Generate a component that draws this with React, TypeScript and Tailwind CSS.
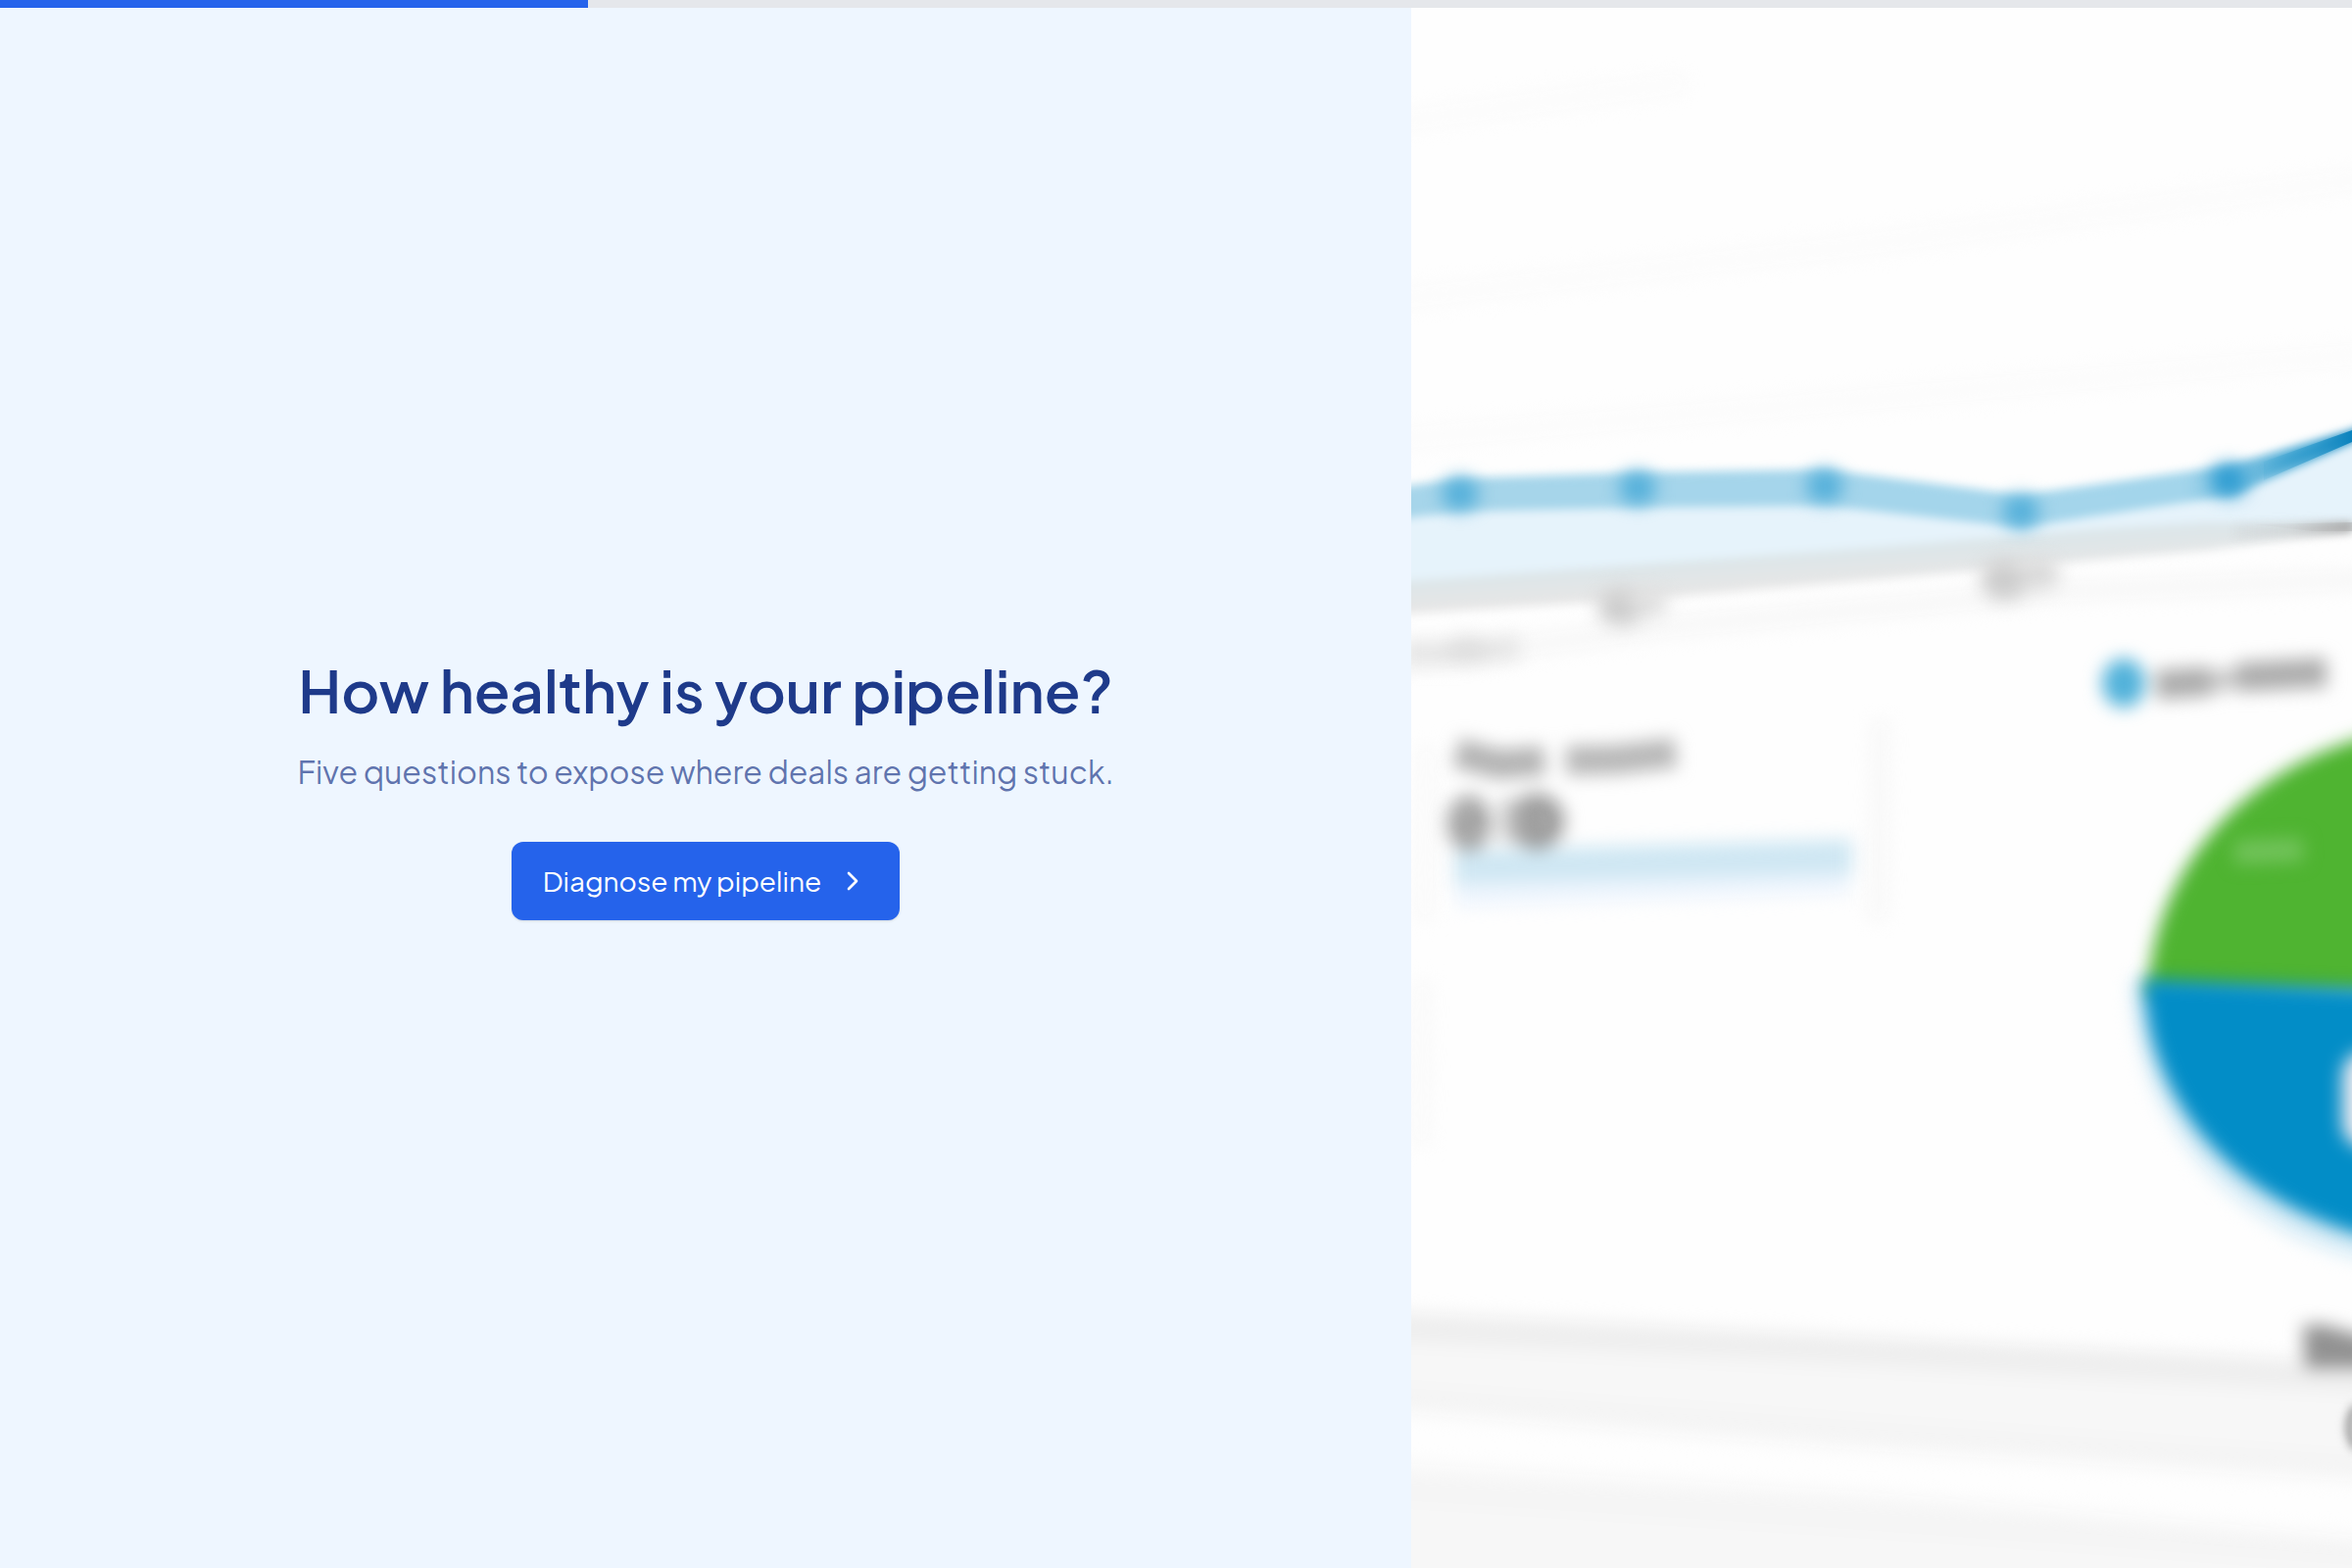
import { ChevronRight } from 'lucide-react';

const PROGRESS = 25;

const linePoints = [
  [1490, 504],
  [1671, 498],
  [1862, 496],
  [2062, 522],
  [2274, 490],
];

function ProgressBar({ value }: { value: number }) {
  return (
    <div
      role="progressbar"
      aria-label="Quiz progress"
      aria-valuenow={value}
      aria-valuemin={0}
      aria-valuemax={100}
      className="h-2 w-full shrink-0 bg-[#e5e7eb]"
    >
      <div className="h-full bg-[#2563eb]" style={{ width: `${value}%` }} />
    </div>
  );
}

function AnalyticsPhoto() {
  return (
    <svg
      viewBox="1440 8 960 1592"
      preserveAspectRatio="xMidYMid slice"
      className="h-full w-full bg-[#fefefe]"
      aria-hidden="true"
    >
      <defs>
        <filter id="soft" filterUnits="userSpaceOnUse" x="1380" y="0" width="1100" height="1660" colorInterpolationFilters="sRGB">
          <feGaussianBlur stdDeviation="5" />
        </filter>
        <filter id="softer" filterUnits="userSpaceOnUse" x="1380" y="0" width="1100" height="1660" colorInterpolationFilters="sRGB">
          <feGaussianBlur stdDeviation="9" />
        </filter>
        <linearGradient id="line" gradientUnits="userSpaceOnUse" x1="1440" y1="0" x2="2400" y2="0">
          <stop offset="0" stopColor="#a6d5ea" />
          <stop offset="0.82" stopColor="#a3d5eb" />
          <stop offset="0.88" stopColor="#7fc3e2" />
          <stop offset="0.95" stopColor="#3ba2d0" />
          <stop offset="1" stopColor="#0a82bd" />
        </linearGradient>
        <linearGradient id="sharpLine" gradientUnits="userSpaceOnUse" x1="2300" y1="0" x2="2400" y2="0">
          <stop offset="0" stopColor="#3ba2d0" stopOpacity="0" />
          <stop offset="0.6" stopColor="#2b98cb" stopOpacity="0.7" />
          <stop offset="1" stopColor="#0a82bd" />
        </linearGradient>
        <linearGradient id="axis" gradientUnits="userSpaceOnUse" x1="1920" y1="560" x2="1922" y2="590">
          <stop offset="0" stopColor="#dce6e9" />
          <stop offset="1" stopColor="#e6e6e6" />
        </linearGradient>
        <linearGradient id="axisTip" gradientUnits="userSpaceOnUse" x1="2240" y1="0" x2="2400" y2="0">
          <stop offset="0" stopColor="#b5b5b5" stopOpacity="0" />
          <stop offset="0.6" stopColor="#b5b5b5" stopOpacity="0.3" />
          <stop offset="1" stopColor="#a3a3a3" />
        </linearGradient>
      </defs>

      {/* grid lines */}
      <g filter="url(#softer)" stroke="#fbfbfb" strokeWidth="20" fill="none">
        <path d="M1400 128 1720 84" />
        <path d="M1400 308 1900 250 2440 178" />
        <path d="M1400 450 1900 408 2440 358" />
      </g>
      <g filter="url(#softer)" fill="none">
        <path d="M1400 680 1700 640 2100 604 2440 590" stroke="#f7f7f7" strokeWidth="20" />
        <path d="M1919 735 1916 940" stroke="#f8f8f8" strokeWidth="20" />
        <path d="M1456 760 1454 940M1452 1000 1450 1170" stroke="#f9f9f9" strokeWidth="16" />
      </g>

      {/* line chart */}
      <g filter="url(#soft)">
        <path
          d="M1380 515 1490 505 1671 499 1862 497 2062 522 2273 490 2440 435V535H2250L2100 545 1930 561 1671 580 1380 602Z"
          fill="#e6f3fb"
        />
        <path
          d="M1380 597 1671 576 1930 557 2140 540 2250 533 2400 534H2440V534L2400 540 2250 562 2100 575 1900 593 1671 612 1380 630Z"
          fill="url(#axis)"
        />
        <path
          d="M1380 504 1490 488 1671 482 1862 479 2062 505 2273 475 2400 439 2440 423V433L2400 451 2280 505 2062 538 1862 516 1671 518 1490 522 1380 535Z"
          fill="url(#line)"
        />
      </g>
      <path d="M2280 534 2400 533V543L2330 550 2280 552Z" fill="url(#axisTip)" filter="url(#soft)" />
      <path d="M2300 535 2400 533V542L2360 542Z" fill="url(#axisTip)" opacity="0.4" />
      <path d="M2310 471 2400 439V451L2310 490Z" fill="url(#sharpLine)" />
      <g filter="url(#softer)">
        {linePoints.map(([x, y]) => (
          <ellipse key={x} cx={x} cy={y} rx="19" ry="17" fill={x > 2200 ? '#2f9dd2' : '#55b0da'} />
        ))}
      </g>

      {/* axis labels, out of focus */}
      <g filter="url(#softer)">
        <path d="M1430 666H1500L1550 660" stroke="#e6e6e6" strokeWidth="24" fill="none" />
        <ellipse cx="1497" cy="663" rx="22" ry="14" fill="#dedede" />
        <ellipse cx="1655" cy="620" rx="25" ry="19" fill="#cdcdcd" />
        <ellipse cx="1682" cy="616" rx="20" ry="14" fill="#dedede" />
        <ellipse cx="2046" cy="592" rx="25" ry="21" fill="#cdcdcd" />
        <ellipse cx="2080" cy="586" rx="22" ry="17" fill="#dadada" />
      </g>

      {/* metric card */}
      <g filter="url(#softer)">
        <path d="M1484 868 1890 856V896L1484 906Z" fill="#cfe7f3" />
        <path d="M1486 902 1888 892V912L1486 926Z" fill="#eef5fd" />
        <path d="M1486 768 1530 780 1576 776" stroke="#b4b4b4" strokeWidth="30" fill="none" />
        <path d="M1598 776 1650 775 1710 768" stroke="#b8b8b8" strokeWidth="30" fill="none" />
        <ellipse cx="1499" cy="840" rx="23" ry="29" fill="#a9a9a9" />
        <ellipse cx="1568" cy="838" rx="29" ry="29" fill="#a0a0a0" />
        <path d="M1538 816V858" stroke="#cccccc" strokeWidth="16" />
      </g>
      <path d="M1492 846 1508 834M1572 830 1580 846" stroke="#a4a4a4" strokeWidth="8" filter="url(#soft)" />

      {/* pie legend */}
      <g filter="url(#softer)">
        <ellipse cx="2167" cy="697" rx="22" ry="25" fill="#52b2da" />
        <path d="M2200 699 2256 695" stroke="#adadad" strokeWidth="30" />
        <path d="M2256 696 2288 691" stroke="#c8c8c8" strokeWidth="22" />
        <path d="M2284 691 2374 686" stroke="#adadad" strokeWidth="30" />
      </g>

      {/* pie chart */}
      <path d="M2174 998C2178 1136 2266 1264 2440 1292V1000Z" fill="#d9edf7" filter="url(#softer)" />
      <g filter="url(#softer)">
        <path d="M2440 746C2300 773 2202 878 2192 1004V1016H2440Z" fill="#4fb431" />
      </g>
      <g filter="url(#softer)">
        <path d="M2188 999C2188 1118 2278 1235 2440 1268V1010Z" fill="#028dc7" />
        <rect x="2390" y="1072" width="80" height="100" rx="26" fill="#eceaf0" />
        <path d="M2280 870 2350 867" stroke="#72c35b" strokeWidth="24" />
      </g>

      {/* footer bands */}
      <g filter="url(#softer)">
        <path d="M1380 1350 1900 1380 2440 1410V1514L1900 1480 1380 1438Z" fill="#f7f7f7" />
        <path d="M1380 1490 1900 1522 2440 1570V1660H1380Z" fill="#f7f7f7" />
        <path d="M1380 1422 1900 1460 2440 1498" stroke="#f4f4f4" strokeWidth="20" fill="none" />
        <path d="M1380 1518 1900 1551 2440 1590" stroke="#f4f4f4" strokeWidth="20" fill="none" />
        <path d="M1380 1351 1900 1378 2440 1407" stroke="#eeeeee" strokeWidth="30" fill="none" />
        <path d="M2350 1352H2372L2420 1366V1396H2352Z" fill="#929292" />
      </g>
      <path
        d="M2406 1435C2395 1448 2395 1465 2406 1478"
        stroke="#9a9a9a"
        strokeWidth="9"
        fill="none"
        filter="url(#soft)"
      />
    </svg>
  );
}

export default function App() {
  return (
    <div className="flex h-screen flex-col overflow-hidden bg-white font-['Plus_Jakarta_Sans',Inter,sans-serif]">
      <ProgressBar value={PROGRESS} />
      <main className="grid min-h-0 flex-1 grid-cols-5">
        <section className="col-span-3 flex flex-col items-center justify-center bg-[#eef6ff] px-12 pb-1 text-center">
          <h1 className="text-[60px] leading-[75px] font-semibold text-[#1e3a8a]">How healthy is your pipeline?</h1>
          <p className="mt-[22px] text-[32px] leading-12 text-[#1e3a8a]/70">
            Five questions to expose where deals are getting stuck.
          </p>
          <button
            type="button"
            className="mt-12 flex h-20 items-center gap-4 rounded-xl bg-[#2563eb] px-8 text-[28px] text-white shadow-sm"
          >
            Diagnose my pipeline
            <ChevronRight className="size-8" strokeWidth={2} aria-hidden="true" />
          </button>
        </section>
        <section className="col-span-2 min-h-0 overflow-hidden">
          <AnalyticsPhoto />
        </section>
      </main>
    </div>
  );
}
